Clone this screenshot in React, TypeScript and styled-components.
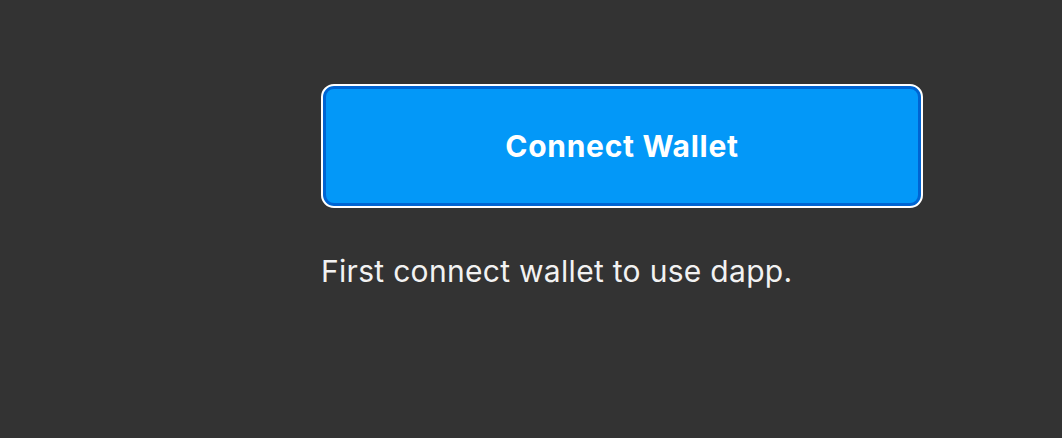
import React from "react";
import styled, { createGlobalStyle } from "styled-components";

const Global = createGlobalStyle`
  html, body { margin: 0; padding: 0; background: #333333; }
  body { font-family: Inter, "Noto Sans", sans-serif; }
`;

const Page = styled.main`
  min-height: 438px;
  box-sizing: border-box;
  padding: 84px 0 0 321px;
  display: flex;
  flex-direction: column;
  align-items: flex-start;
  gap: 45px;
`;

const ConnectButton = styled.button`
  width: 602px;
  height: 124px;
  box-sizing: border-box;
  border: 2px solid #ffffff;
  border-radius: 13px;
  background: #0398f8;
  box-shadow: inset 0 0 0 3px #0064d2;
  color: #ffffff;
  font-family: Inter, "Noto Sans", sans-serif;
  font-weight: 700;
  font-size: 30px;
  letter-spacing: 0.7px;
  cursor: pointer;
  padding: 0;
`;

const Hint = styled.p`
  margin: 0;
  color: #f2f2f2;
  font-size: 30px;
  font-weight: 400;
  letter-spacing: 0.3px;
  line-height: 36px;
`;

export default function App() {
  return (
    <>
      <Global />
      <Page>
        <ConnectButton>Connect Wallet</ConnectButton>
        <Hint>First connect wallet to use dapp.</Hint>
      </Page>
    </>
  );
}
